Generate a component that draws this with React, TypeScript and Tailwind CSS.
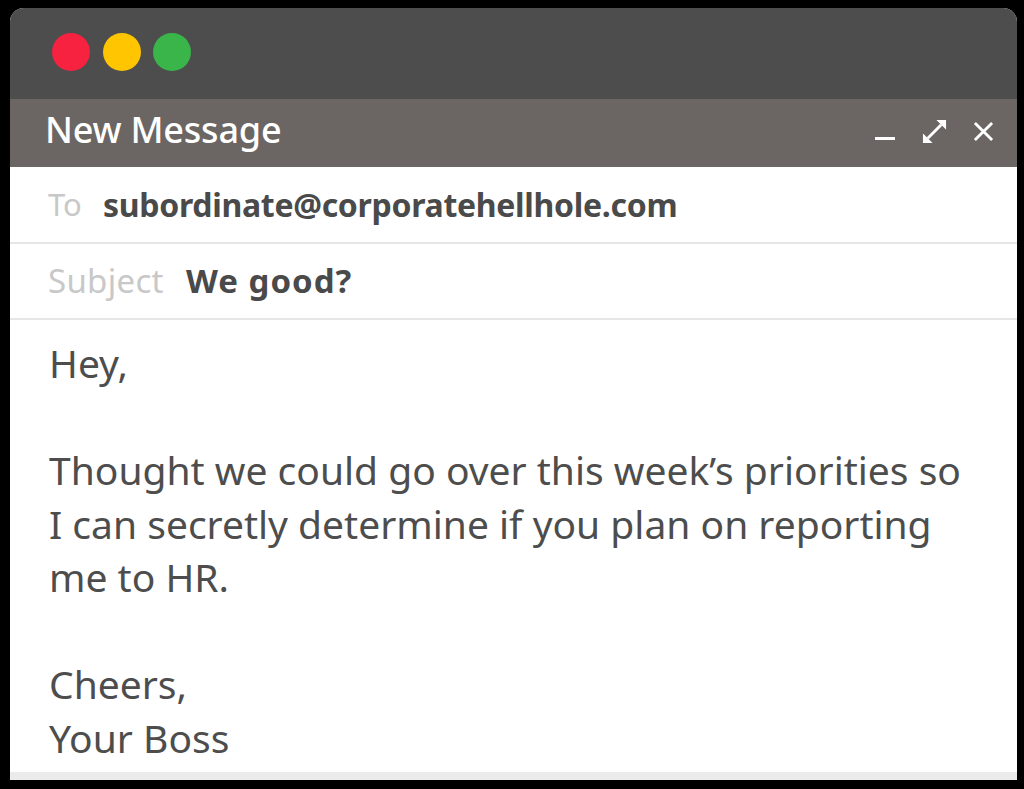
import { Fragment } from "react";

const body = [
  "Hey,",
  "",
  "Thought we could go over this week’s priorities so",
  "I can secretly determine if you plan on reporting",
  "me to HR.",
  "",
  "Cheers,",
  "Your Boss",
];

const Minimize = () => (
  <svg width="22" height="22" viewBox="0 0 22 22" className="block">
    <rect x="1" y="17" width="20" height="3" fill="white" />
  </svg>
);

const Expand = () => (
  <svg width="25" height="25" viewBox="0 0 26 26" className="block">
    <line x1="6" y1="20" x2="20" y2="6" stroke="white" strokeWidth="3" />
    <polygon points="25,1 25,11 15,1" fill="white" />
    <polygon points="1,25 1,15 11,25" fill="white" />
  </svg>
);

const Close = () => (
  <svg width="21" height="21" viewBox="0 0 22 22" className="block">
    <path d="M2 2 L20 20 M20 2 L2 20" stroke="white" strokeWidth="3" />
  </svg>
);

export default function App() {
  return (
    <div className="w-[1024px] h-[789px] bg-black pl-[10px] pt-[8px] overflow-hidden font-['Noto_Sans',sans-serif]">
      <div className="w-[1007px] h-[772px] flex flex-col rounded-t-[14px] overflow-hidden bg-white">
        {/* title bar */}
        <div className="h-[91px] bg-[#4d4d4d] flex items-center gap-[12.5px] pl-[42px] pb-[3px]">
          <span className="w-[38px] h-[38px] rounded-full bg-[#f72140]" />
          <span className="w-[38px] h-[38px] rounded-full bg-[#fec500]" />
          <span className="w-[38px] h-[38px] rounded-full bg-[#39b54a]" />
        </div>

        {/* new message bar */}
        <div className="h-[68px] bg-[#6b6663] flex items-center pl-[35px] pr-[23px]">
          <span className="text-white text-[36px] font-medium tracking-[-0.2px] leading-none pb-[6px]">
            New Message
          </span>
          <div className="ml-auto flex items-center gap-[26px] pb-[4px]">
            <Minimize />
            <Expand />
            <Close />
          </div>
        </div>

        {/* to */}
        <div className="h-[75px] flex items-center pl-[38px] border-b-2 border-[#e6e6e6] box-content">
          <span className="text-[#c8c8c8] text-[31px] w-[55px]">To</span>
          <span className="text-[#4a4a4a] text-[32px] font-bold tracking-[-0.3px]">
            subordinate@corporatehellhole.com
          </span>
        </div>

        {/* subject */}
        <div className="h-[74px] flex items-center pl-[38px] border-b-2 border-[#e6e6e6] box-content">
          <span className="text-[#c8c8c8] text-[33px] tracking-[0.3px] w-[138px]">Subject</span>
          <span className="text-[#4a4a4a] text-[33px] font-bold tracking-[1px]">We good?</span>
        </div>

        {/* body */}
        <div className="flex-1 pl-[39px] pt-[16px] text-[#4d4d4d] text-[39px] leading-[53.5px]">
          {body.map((line, i) => (
            <Fragment key={i}>
              <div className="h-[53.5px] whitespace-nowrap">{line}</div>
            </Fragment>
          ))}
        </div>
        <div className="h-[8px] bg-[#ebebeb]" />
      </div>
    </div>
  );
}
